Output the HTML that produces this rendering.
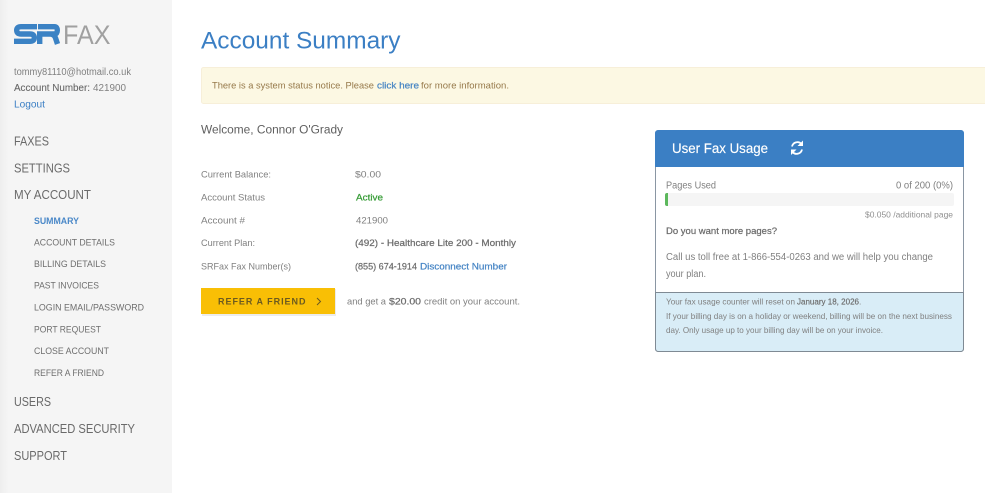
<!DOCTYPE html>
<html><head><meta charset="utf-8"><title>Account Summary</title>
<style>
html,body{margin:0;padding:0;background:#fff;width:985px;height:493px;overflow:hidden}
svg{position:absolute;left:0;top:0;display:block;filter:blur(0.3px)}
text{font-family:"Liberation Sans",sans-serif;font-size:10px;fill:#666}
.n{font-size:12.5px;fill:#6a6a6a}
.s{font-size:9.5px;fill:#6e6e6e}
.l{fill:#808080;font-size:9.5px}
.v{fill:#808080;font-size:9.5px}
.b{fill:#666;font-size:9.5px;stroke:#777;stroke-width:.25}
.u{fill:#3b7fc4}
</style></head><body>
<svg width="985" height="493" viewBox="0 0 985 493" xmlns="http://www.w3.org/2000/svg">
<defs>
<linearGradient id="g" x1="0" x2="1" y1="0" y2="0"><stop offset="0" stop-color="#eeeeee"/><stop offset="0.05" stop-color="#f5f5f5"/><stop offset="1" stop-color="#f5f5f5"/></linearGradient>
</defs>
<rect width="172" height="493" fill="url(#g)"/>

<!-- logo -->
<g fill="none" stroke="#3b82c4" stroke-width="5.400">
<path d="M37 26.700H21Q16.700 26.700 16.700 30.300Q16.700 34 21 34H30Q34.300 34 34.300 37.800Q34.300 41.300 30 41.300H14"/>
<path d="M39.700 44V34H54.500Q57.300 34 57.300 30.300Q57.300 26.700 54.500 26.700H38M50 34Q54.500 34.500 55.500 38L57.500 44"/>
</g>
<text x="63" y="44" textLength="47.500" lengthAdjust="spacingAndGlyphs" style="font-size:27px;fill:#a0a0a0">FAX</text>

<text x="14" y="75" textLength="117" lengthAdjust="spacingAndGlyphs" style="font-size:10px;fill:#808080">tommy81110@hotmail.co.uk</text>
<text x="14" y="91" textLength="76" lengthAdjust="spacingAndGlyphs" style="font-size:10px;fill:#666;stroke:#777;stroke-width:.12">Account Number:</text>
<text x="93" y="91" textLength="33" lengthAdjust="spacingAndGlyphs" style="font-size:10px;fill:#808080">421900</text>
<text x="14" y="107.500" textLength="31" lengthAdjust="spacingAndGlyphs" class="u" style="font-size:10px">Logout</text>

<text class="n" x="14" y="145.500" textLength="35" lengthAdjust="spacingAndGlyphs">FAXES</text>
<text class="n" x="14" y="172.500" textLength="56" lengthAdjust="spacingAndGlyphs">SETTINGS</text>
<text class="n" x="14" y="199" textLength="77" lengthAdjust="spacingAndGlyphs">MY ACCOUNT</text>
<text class="s u" x="34" y="224" textLength="45" lengthAdjust="spacingAndGlyphs" style="font-weight:bold;fill:#4a88c8">SUMMARY</text>
<text class="s" x="34" y="245.500" textLength="81" lengthAdjust="spacingAndGlyphs">ACCOUNT DETAILS</text>
<text class="s" x="34" y="267" textLength="72" lengthAdjust="spacingAndGlyphs">BILLING DETAILS</text>
<text class="s" x="34" y="288.500" textLength="65" lengthAdjust="spacingAndGlyphs">PAST INVOICES</text>
<text class="s" x="34" y="310.500" textLength="110" lengthAdjust="spacingAndGlyphs">LOGIN EMAIL/PASSWORD</text>
<text class="s" x="34" y="332.500" textLength="67" lengthAdjust="spacingAndGlyphs">PORT REQUEST</text>
<text class="s" x="34" y="354" textLength="75" lengthAdjust="spacingAndGlyphs">CLOSE ACCOUNT</text>
<text class="s" x="34" y="376" textLength="70" lengthAdjust="spacingAndGlyphs">REFER A FRIEND</text>
<text class="n" x="14" y="406" textLength="37" lengthAdjust="spacingAndGlyphs">USERS</text>
<text class="n" x="14" y="433" textLength="121" lengthAdjust="spacingAndGlyphs">ADVANCED SECURITY</text>
<text class="n" x="14" y="460" textLength="53" lengthAdjust="spacingAndGlyphs">SUPPORT</text>

<!-- main -->
<text x="201" y="48.500" textLength="199.500" lengthAdjust="spacingAndGlyphs" style="font-size:24px;fill:#3b7fc4">Account Summary</text>
<rect x="201.500" y="67.500" width="790" height="36" rx="2" fill="#fcf8e3" stroke="#f7efd9"/>
<text x="212" y="88.500" textLength="162" lengthAdjust="spacingAndGlyphs" style="font-size:9.500px;fill:#96794a">There is a system status notice. Please</text>
<text x="377" y="88.500" textLength="42" lengthAdjust="spacingAndGlyphs" style="font-size:9.500px;fill:#3b7fc0;stroke:#5a90c8;stroke-width:.25">click here</text>
<text x="421" y="88.500" textLength="88" lengthAdjust="spacingAndGlyphs" style="font-size:9.500px;fill:#96794a">for more information.</text>
<text x="201" y="133.500" textLength="142" lengthAdjust="spacingAndGlyphs" style="font-size:11.500px;fill:#5f5f5f">Welcome, Connor O'Grady</text>

<text class="l" x="201" y="177.500" textLength="70" lengthAdjust="spacingAndGlyphs">Current Balance:</text>
<text class="v" x="355" y="177.500" textLength="26" lengthAdjust="spacingAndGlyphs">$0.00</text>
<text class="l" x="201" y="200.500" textLength="64" lengthAdjust="spacingAndGlyphs">Account Status</text>
<text x="356" y="200.500" textLength="27" lengthAdjust="spacingAndGlyphs" style="font-size:9.500px;fill:#2a962a;stroke:#4aa54a;stroke-width:.25">Active</text>
<text class="l" x="201" y="223.500" textLength="44" lengthAdjust="spacingAndGlyphs">Account #</text>
<text class="v" x="356" y="223.500" textLength="32" lengthAdjust="spacingAndGlyphs">421900</text>
<text class="l" x="201" y="246" textLength="54" lengthAdjust="spacingAndGlyphs">Current Plan:</text>
<text class="b" x="355" y="246" textLength="161" lengthAdjust="spacingAndGlyphs">(492) - Healthcare Lite 200 - Monthly</text>
<text class="l" x="201" y="269.500" textLength="90" lengthAdjust="spacingAndGlyphs">SRFax Fax Number(s)</text>
<text class="b" x="355" y="269.500" textLength="62" lengthAdjust="spacingAndGlyphs">(855) 674-1914</text>
<text x="420" y="269.500" textLength="87" lengthAdjust="spacingAndGlyphs" style="font-size:9.500px;fill:#3b7fc4;stroke:#5a90c8;stroke-width:.25">Disconnect Number</text>

<rect x="202" y="289" width="134" height="27" fill="#dcdcdc" opacity="0.55"/>
<rect x="201" y="288" width="134" height="26" fill="#f9bf05"/>
<text x="218" y="304.500" textLength="87.500" lengthAdjust="spacing" style="font-size:9px;font-weight:bold;fill:#6b5a20">REFER A FRIEND</text>
<path d="M317 298L320.500 301.500L317 305" fill="none" stroke="#6b5a20" stroke-width="1"/>
<text x="347" y="304.500" textLength="39" lengthAdjust="spacingAndGlyphs" style="font-size:9.500px;fill:#808080">and get a</text>
<text x="389" y="304.500" textLength="32" lengthAdjust="spacingAndGlyphs" style="font-size:9.500px;fill:#666;stroke:#777;stroke-width:.25">$20.00</text>
<text x="424" y="304.500" textLength="96" lengthAdjust="spacingAndGlyphs" style="font-size:9.500px;fill:#808080">credit on your account.</text>

<!-- card -->
<rect x="655.500" y="130.500" width="308" height="221" rx="3" fill="#fff" stroke="#8a96a3"/>
<path d="M655 167V133.500Q655 130 658.500 130H960.500Q964 130 964 133.500V167Z" fill="#3b7fc4"/>
<text x="672" y="153" textLength="96" lengthAdjust="spacingAndGlyphs" style="font-size:13.500px;fill:#fff;stroke:#fff;stroke-width:.15">User Fax Usage</text>
<g fill="none" stroke="#fff" stroke-width="1.800">
<path d="M792 146.500A5.500 5.500 0 0 1 801.500 144"/>
<path d="M802 149.500A5.500 5.500 0 0 1 792.500 152"/>
</g>
<path d="M803 140.500V146H797.500Z M791 155V149.500H796.500Z" fill="#fff"/>

<text x="666" y="188.500" textLength="50" lengthAdjust="spacingAndGlyphs" style="font-size:10px;fill:#808080">Pages Used</text>
<text x="896" y="188.500" textLength="57" lengthAdjust="spacingAndGlyphs" style="font-size:10px;fill:#808080">0 of 200 (0%)</text>
<rect x="665" y="193" width="289" height="13" rx="2" fill="#f5f5f5"/>
<path d="M668 193V206H667Q665 206 665 204V195Q665 193 667 193Z" fill="#5cb85c"/>
<text x="865" y="217.500" textLength="88" lengthAdjust="spacingAndGlyphs" style="font-size:8.500px;fill:#909090">$0.050 /additional page</text>
<text x="666" y="234" textLength="111" lengthAdjust="spacingAndGlyphs" style="font-size:9.500px;fill:#666;stroke:#777;stroke-width:.25">Do you want more pages?</text>
<text x="666" y="260" textLength="267" lengthAdjust="spacingAndGlyphs" style="font-size:10px;fill:#808080">Call us toll free at 1-866-554-0263 and we will help you change</text>
<text x="666" y="277" textLength="40" lengthAdjust="spacingAndGlyphs" style="font-size:10px;fill:#808080">your plan.</text>

<path d="M655.500 292.500H963.500V348.500Q963.500 351.500 960.500 351.500H658.500Q655.500 351.500 655.500 348.500Z" fill="#d9edf7" stroke="#7f8a94"/>
<text x="666" y="304.500" textLength="129" lengthAdjust="spacingAndGlyphs" style="font-size:8.500px;fill:#808080">Your fax usage counter will reset on</text>
<text x="797" y="304.500" textLength="62" lengthAdjust="spacingAndGlyphs" style="font-size:8.500px;fill:#666;stroke:#777;stroke-width:.18">January 18, 2026</text>
<text x="859" y="304.500" style="font-size:8.500px;fill:#808080">.</text>
<text x="666" y="319" textLength="286" lengthAdjust="spacingAndGlyphs" style="font-size:8.500px;fill:#808080">If your billing day is on a holiday or weekend, billing will be on the next business</text>
<text x="666" y="333" textLength="217" lengthAdjust="spacingAndGlyphs" style="font-size:8.500px;fill:#808080">day. Only usage up to your billing day will be on your invoice.</text>
</svg>
</body></html>
